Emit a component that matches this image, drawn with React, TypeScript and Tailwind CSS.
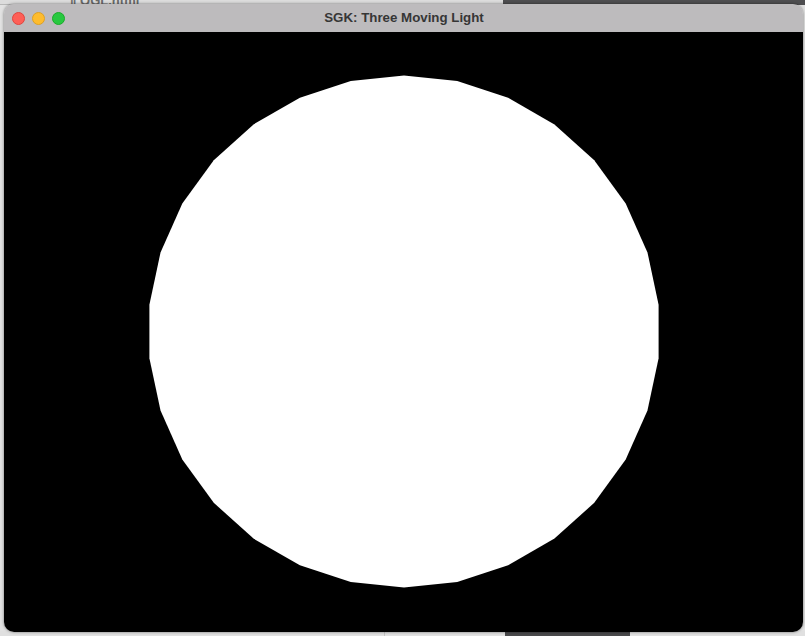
import React from "react";

const sides = 30;
const cx = 400;
const cy = 299.5;
const R = 256;
const pts = Array.from({ length: sides }, (_, k) => {
  const a = ((6 + 12 * k) * Math.PI) / 180;
  return `${(cx + R * Math.cos(a)).toFixed(2)},${(cy - R * Math.sin(a)).toFixed(2)}`;
}).join(" ");

export default function App() {
  return (
    <div className="relative w-[805px] h-[636px] overflow-hidden bg-[#e2e2e2]" style={{ fontFamily: '"Liberation Sans", Arial, sans-serif' }}>
      {/* desktop behind window */}
      <div className="flex flex-col h-full w-full">
        <div className="flex h-[5px] flex-none">
          <div className="relative w-[503px] flex-none bg-[#dcdcdc] border-b border-[#b8b8b8]">
            <span className="absolute left-[70px] top-[-9px] text-[13px] font-bold text-[#6a6a6a] whitespace-nowrap">‖ OGL.html</span>
          </div>
          <div className="flex-1 bg-[#4e4e50]" />
        </div>
        <div className="flex-1 bg-[#e2e2e2]" />
        <div className="flex h-[5px] flex-none">
          <div className="w-[385px] flex-none bg-[#e0e0e0] border-r border-[#c4c4c4]" />
          <div className="w-[120px] flex-none bg-[#e0e0e0]" />
          <div className="w-[125px] flex-none bg-[#4a4a4c]" />
          <div className="flex-1 bg-[#e0e0e0]" />
        </div>
      </div>

      {/* window */}
      <div className="absolute left-[4px] top-[4px] w-[799px] h-[628px] rounded-[10px] overflow-hidden flex flex-col shadow-[0_0_3px_rgba(0,0,0,0.5)]">
        <div className="relative h-[28px] flex-none bg-[#bdbbbd] flex items-center justify-center">
          <div className="absolute left-[8px] top-[8px] flex gap-[7px]">
            <div className="w-[13px] h-[13px] rounded-full bg-[#fe5f57] border border-[#e0443e]" />
            <div className="w-[13px] h-[13px] rounded-full bg-[#febc2e] border border-[#dea123]" />
            <div className="w-[13px] h-[13px] rounded-full bg-[#28c840] border border-[#1aab29]" />
          </div>
          <span className="text-[13.3px] font-bold text-[#363636] pl-[1px]">SGK: Three Moving Light</span>
        </div>
        <div className="flex-1 bg-black">
          <svg width="799" height="600" viewBox="0 0 799 600" className="block">
            <polygon points={pts} fill="#ffffff" />
          </svg>
        </div>
      </div>
    </div>
  );
}
